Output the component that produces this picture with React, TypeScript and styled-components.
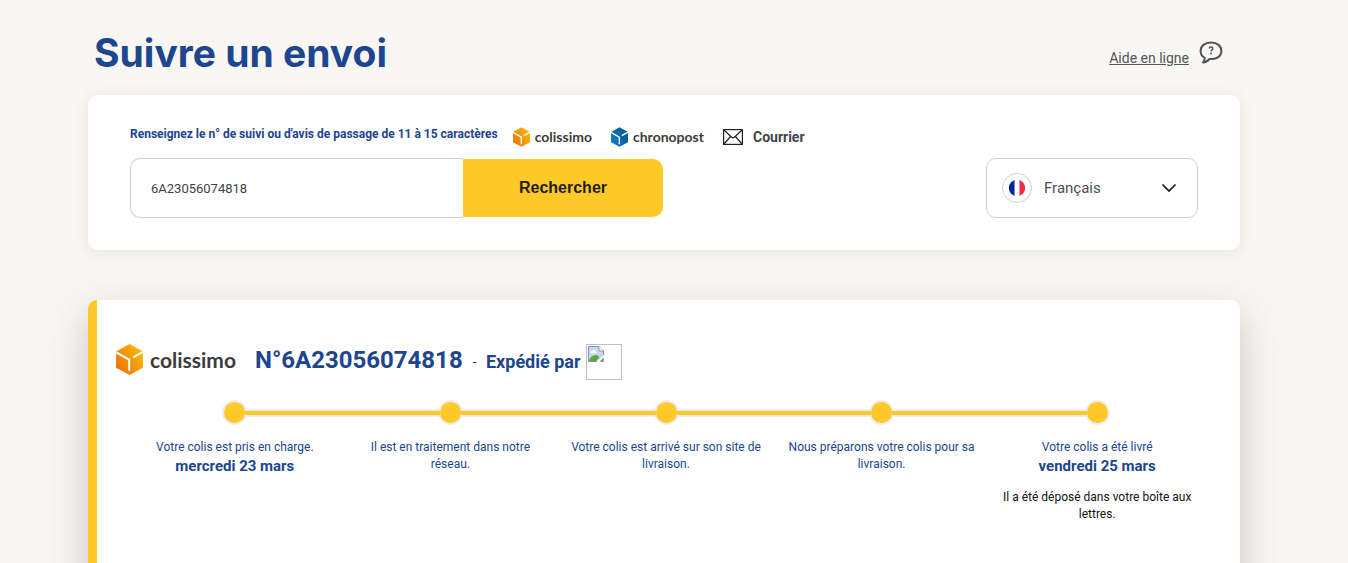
import React from 'react';
import styled, { createGlobalStyle } from 'styled-components';

const NAVY = '#20458f';
const YELLOW = '#ffc928';
const BORDER = '#cfcfcf';
const HALO = '#ededee';

const GlobalStyle = createGlobalStyle`
  *, *::before, *::after { box-sizing: border-box; }
  body {
    margin: 0;
    background: #f8f7f3;
    color: #1a1a1a;
    font-family: Roboto, 'Liberation Sans', sans-serif;
    overflow: hidden;
  }
  h1, h2, p, ol { margin: 0; padding: 0; }
`;

const Page = styled.div`
  padding-right: 20px;
`;

const Container = styled.div`
  max-width: 1152px;
  margin: 0 auto;
  display: flex;
  flex-direction: column;
`;

const Header = styled.header`
  display: flex;
  justify-content: space-between;
  align-items: flex-start;
  padding: 28px 17px 15px 6px;
`;

const PageTitle = styled.h1`
  font: 700 39px/50px Inter, sans-serif;
  color: ${NAVY};
`;

const HelpLink = styled.a`
  display: flex;
  align-items: flex-start;
  gap: 10px;
  height: 52px;
  padding-top: 13px;
  color: #4f555b;
  font-size: 14px;
  line-height: 20px;

  span { padding-top: 7px; }
`;

const SearchCard = styled.section`
  background: #fff;
  border-radius: 10px;
  box-shadow: 0 2px 14px rgba(60, 60, 40, 0.1);
  padding: 30px 42px 32px;
`;

const LabelRow = styled.div`
  display: flex;
  align-items: center;
  gap: 19px;
  height: 23px;
  margin-bottom: 10px;
`;

const FieldLabel = styled.label`
  align-self: flex-start;
  margin-right: -4px;
  font-size: 12px;
  font-weight: 700;
  line-height: 18px;
  color: ${NAVY};
`;

const Brand = styled.span<{ $large?: boolean }>`
  display: inline-flex;
  align-items: center;
  gap: ${({ $large }) => ($large ? 7 : 5)}px;
  font: 700 ${({ $large }) => ($large ? 21 : 14)}px/20px Lato, sans-serif;
  color: #3c3c3b;
`;

const MailBrand = styled.span`
  display: inline-flex;
  align-items: center;
  gap: 10px;
  font-size: 14px;
  font-weight: 700;
  line-height: 20px;
  color: #414549;
`;

const SearchRow = styled.div`
  display: flex;
  justify-content: space-between;
  align-items: center;
`;

const SearchForm = styled.form`
  display: flex;
  align-items: center;
`;

const TrackingInput = styled.input`
  width: 333px;
  height: 60px;
  padding: 0 20px;
  border: 1px solid ${BORDER};
  border-right: 0;
  border-radius: 10px 0 0 10px;
  background: #fff;
  font: 400 13px/20px Roboto, sans-serif;
  color: #3f4246;
  outline: none;
`;

const SearchButton = styled.button`
  width: 200px;
  height: 58px;
  border: 0;
  border-radius: 0 10px 10px 0;
  background: ${YELLOW};
  color: #1e1e1e;
  font: 700 16px/20px 'Liberation Sans', sans-serif;
  cursor: pointer;
`;

const LanguageBox = styled.div`
  display: flex;
  align-items: center;
  width: 212px;
  height: 60px;
  padding: 0 20px 0 15px;
  border: 1px solid ${BORDER};
  border-radius: 10px;
`;

const LanguageSelect = styled.select`
  appearance: none;
  flex: 1;
  min-width: 0;
  border: 0;
  padding: 0 0 0 12px;
  background: transparent;
  color: #4b4f54;
  font: 400 15px/20px Roboto, sans-serif;
  outline: none;
`;

const ResultCard = styled.section`
  min-height: 300px;
  margin-top: 50px;
  padding: 44px 19px 40px;
  background: #fff;
  border-left: 9px solid ${YELLOW};
  border-radius: 9px;
  box-shadow: 0 15px 40px rgba(50, 50, 40, 0.24);
`;

const ResultHeader = styled.div`
  display: flex;
  align-items: flex-start;
`;

const ParcelNumber = styled.h2`
  margin-left: 19px;
  font-size: 24px;
  font-weight: 700;
  line-height: 32px;
  color: ${NAVY};
`;

const Dash = styled.span`
  margin: 0 10px;
  font-size: 12px;
  line-height: 36px;
`;

const Sender = styled.span`
  margin-right: 5px;
  font-size: 18px;
  font-weight: 700;
  line-height: 36px;
  color: ${NAVY};
`;

const Steps = styled.ol`
  display: grid;
  grid-template-columns: repeat(5, 1fr);
  margin: 20px 16px 0 11px;
  list-style: none;
`;

const Step = styled.li`
  display: flex;
  flex-direction: column;
  text-align: center;
  font-size: 12px;
  line-height: 17px;
  color: ${NAVY};
`;

const Track = styled.div`
  display: flex;
  align-items: center;
  height: 25px;
  margin-bottom: 14px;
`;

const Line = styled.span<{ $hidden?: boolean }>`
  position: relative;
  flex: 1;
  height: 8px;
  background: ${YELLOW};
  border: solid ${HALO};
  border-width: 2px 0;
  visibility: ${({ $hidden }) => ($hidden ? 'hidden' : 'visible')};
`;

const Dot = styled.span`
  width: 21px;
  height: 21px;
  border-radius: 50%;
  background: ${YELLOW};
  box-shadow: 0 0 0 2px ${HALO};
`;

const StepText = styled.p`
  padding: 0 10px;
`;

const StepDate = styled.p`
  font-size: 15px;
  font-weight: 700;
  line-height: 20px;
`;

const StepNote = styled.p`
  margin-top: 13px;
  padding: 0 10px;
  color: #111;
`;

const CubeIcon = ({ id, height, from, to }: { id: string; height: number; from: string; to: string }) => (
  <svg width={Math.round(height * 0.87)} height={height} viewBox="0 0 26 30" aria-hidden="true">
    <defs>
      <linearGradient id={id} x1="0" y1="1" x2="1" y2="0.3">
        <stop offset="0" stopColor={from} />
        <stop offset="1" stopColor={to} />
      </linearGradient>
    </defs>
    <path d="M13 0 26 7.2V23L13 30 0 23V7.2Z" fill={`url(#${id})`} />
    <path d="M0 8 12.7 15.2V26" fill="none" stroke="#fff" strokeWidth="2" />
    <path d="M16.5 13 26 7.6" fill="none" stroke="#fff" strokeWidth="2" />
  </svg>
);

const HelpIcon = () => (
  <svg width="24" height="23" viewBox="0 0 24 23" fill="none" aria-hidden="true">
    <path
      d="M5.800 16.800C3 15.300 1.600 12.800 1.600 9.900 1.600 5 5.800 1.500 12 1.500s10.400 3.500 10.400 8.400c0 5-4 8.200-9.700 8.200-.9 0-1.400 0-2.200-.2C9 20.100 6.800 21.300 4 21.400c1.100-1.300 1.800-2.600 1.800-4.600Z"
      stroke="#4f555b"
      strokeWidth="2"
      strokeLinejoin="round"
    />
    <path d="M10.200 7.500c0-1 .8-1.500 1.800-1.500s1.800.6 1.800 1.500c0 1.300-1.700 1.400-1.700 2.900" stroke="#4f555b" strokeWidth="1.500" />
    <path d="M11.300 11.600h1.600v1.600h-1.600z" fill="#4f555b" />
  </svg>
);

const MailIcon = () => (
  <svg width="20" height="16" viewBox="0 0 20 16" fill="none" stroke="#222" aria-hidden="true">
    <rect x="0.6" y="0.6" width="18.800" height="14.800" strokeWidth="1.200" />
    <path d="M1 1l7.600 7.200c.9.8 1.900.8 2.800 0L19 1M1 15l6.500-7.500M19 15l-6.500-7.500" strokeWidth="1.200" />
  </svg>
);

const FlagIcon = () => (
  <svg width="30" height="30" viewBox="0 0 30 30" aria-hidden="true">
    <defs>
      <clipPath id="flag-disc">
        <circle cx="15" cy="15" r="8.200" />
      </clipPath>
    </defs>
    <circle cx="15" cy="15" r="14.500" fill="#fff" stroke={BORDER} />
    <g clipPath="url(#flag-disc)">
      <path d="M6 6h6.500v18H6z" fill="#00239c" />
      <path d="M17.500 6H24v18h-6.500z" fill="#f42a3f" />
    </g>
  </svg>
);

const ChevronIcon = () => (
  <svg width="16" height="10" viewBox="0 0 16 10" fill="none" aria-hidden="true">
    <path d="M1.500 1.500 8 8l6.500-6.500" stroke="#1c1c1c" strokeWidth="1.700" />
  </svg>
);

const MissingImage = () => (
  <svg width="36" height="36" viewBox="0 0 36 36" role="img" aria-label="Expéditeur">
    <rect x="0.5" y="0.5" width="35" height="35" fill="#fff" stroke="#c0c0c0" />
    <path d="M2.500 2.500H13L17.500 7v4.500L11 17.500H2.500Z" fill="#c5d8f7" />
    <path d="M3 17c1-4 3.500-6 6.500-6 1.800 0 3 .8 4 2.200L10 17Z" fill="#57a83c" />
    <path d="M4.500 8.500c0-1.200 1-1.800 2-1.600.6-1.500 3-1.300 3.200.5 1 0 1.500 1.100.8 1.800h-5.300Z" fill="#fff" />
    <path d="M11 17.500H2.500v-15H13L17.500 7v4" fill="none" stroke="#929292" />
    <path d="M13 2.500V7h4.500" fill="#fff" stroke="#929292" />
    <path d="M14 17.500h3.500V14Z" fill="#57a83c" stroke="#929292" strokeWidth="0.6" />
  </svg>
);

interface StepData {
  text: string;
  date?: string;
  note?: string;
}

const steps: StepData[] = [
  { text: 'Votre colis est pris en charge.', date: 'mercredi 23 mars' },
  { text: 'Il est en traitement dans notre réseau.' },
  { text: 'Votre colis est arrivé sur son site de livraison.' },
  { text: 'Nous préparons votre colis pour sa livraison.' },
  { text: 'Votre colis a été livré', date: 'vendredi 25 mars', note: 'Il a été déposé dans votre boîte aux lettres.' },
];

export default function App() {
  return (
    <Page>
      <GlobalStyle />
      <Container>
        <Header>
          <PageTitle>Suivre un envoi</PageTitle>
          <HelpLink href="#aide">
            <span>Aide en ligne</span>
            <HelpIcon />
          </HelpLink>
        </Header>

        <SearchCard>
          <LabelRow>
            <FieldLabel htmlFor="tracking">Renseignez le n° de suivi ou d'avis de passage de 11 à 15 caractères</FieldLabel>
            <Brand>
              <CubeIcon id="cube-colissimo" height={20} from="#ea6a0c" to="#fbb800" />
              colissimo
            </Brand>
            <Brand>
              <CubeIcon id="cube-chronopost" height={20} from="#0a86cc" to="#0a5596" />
              chronopost
            </Brand>
            <MailBrand>
              <MailIcon />
              Courrier
            </MailBrand>
          </LabelRow>
          <SearchRow>
            <SearchForm onSubmit={(e) => e.preventDefault()}>
              <TrackingInput id="tracking" type="text" defaultValue="6A23056074818" />
              <SearchButton type="submit">Rechercher</SearchButton>
            </SearchForm>
            <LanguageBox>
              <FlagIcon />
              <LanguageSelect aria-label="Langue" defaultValue="fr">
                <option value="fr">Français</option>
              </LanguageSelect>
              <ChevronIcon />
            </LanguageBox>
          </SearchRow>
        </SearchCard>

        <ResultCard>
          <ResultHeader>
            <Brand $large>
              <CubeIcon id="cube-parcel" height={31} from="#ea6a0c" to="#fbb800" />
              colissimo
            </Brand>
            <ParcelNumber>N°6A23056074818</ParcelNumber>
            <Dash>-</Dash>
            <Sender>Expédié par</Sender>
            <MissingImage />
          </ResultHeader>
          <Steps>
            {steps.map((step, i) => (
              <Step key={step.text}>
                <Track>
                  <Line $hidden={i === 0} />
                  <Dot />
                  <Line $hidden={i === steps.length - 1} />
                </Track>
                <StepText>{step.text}</StepText>
                {step.date && <StepDate>{step.date}</StepDate>}
                {step.note && <StepNote>{step.note}</StepNote>}
              </Step>
            ))}
          </Steps>
        </ResultCard>
      </Container>
    </Page>
  );
}
